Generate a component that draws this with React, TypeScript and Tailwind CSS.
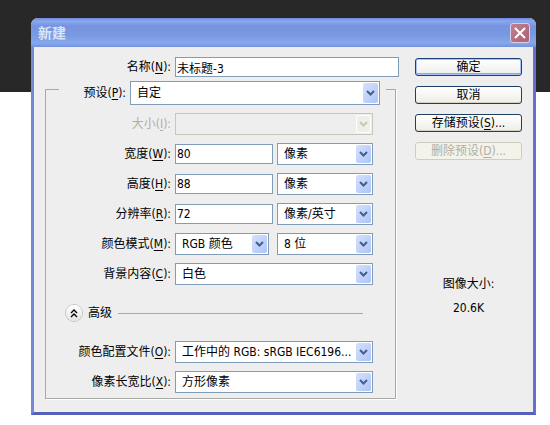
import type { ReactNode } from 'react';

function Hotkey({ children }: { children: ReactNode }) {
  return <span className="underline underline-offset-2">{children}</span>;
}

function Label({ id, text, hotkey, disabled = false, width = 'w-[125px]' }: { id: string; text: string; hotkey: string; disabled?: boolean; width?: string }) {
  return (
    <label htmlFor={id} className={`${width} shrink-0 whitespace-nowrap text-right ${disabled ? 'text-[#b0aea4]' : ''}`}>
      {text}(<Hotkey>{hotkey}</Hotkey>):
    </label>
  );
}

function Select({ id, value, width = 'flex-1', height = 'h-[22px]', label, disabled = false }: { id: string; value: string; width?: string; height?: string; label?: string; disabled?: boolean }) {
  return (
    <div className={`relative min-w-0 ${width}`}>
      <select
        id={id}
        aria-label={label}
        disabled={disabled}
        className={`block w-full appearance-none border pl-1.5 pr-4 outline-none ${height} ${
          disabled ? 'border-[#c9c7ba] bg-[#eeeeee] opacity-100' : 'border-[#7f9db9] bg-white'
        }`}
      >
        <option>{value}</option>
      </select>
      <span
        className={`pointer-events-none absolute inset-y-0.5 right-0.5 flex w-[15px] items-center justify-center rounded-xs ${
          disabled ? 'border border-white bg-[#efeee8] text-[#c9c7ba]' : 'bg-linear-to-br from-[#d5e0fd] to-[#afc5f6] text-[#44608c]'
        }`}
      >
        <svg width="9" height="6" viewBox="0 0 9 6" className="shrink-0" fill="none" stroke="currentColor" strokeWidth="2">
          <path d="M1 1l3.5 3.5L8 1" />
        </svg>
      </span>
    </div>
  );
}

function TextInput({ id, value, width }: { id: string; value: string; width: string }) {
  return <input id={id} defaultValue={value} className={`h-5 min-w-0 border border-[#7f9db9] bg-white px-px outline-none ${width}`} />;
}

function Row({ children }: { children: ReactNode }) {
  return <div className="flex h-[22px] items-center gap-1">{children}</div>;
}

function Button({ children, primary = false, disabled = false }: { children: ReactNode; primary?: boolean; disabled?: boolean }) {
  const look = disabled
    ? 'border-[#cfcdbf] bg-[#f4f3ea] text-[#b0aea4]'
    : primary
      ? 'border-[#1d3f77] bg-linear-to-b from-white to-[#eeeeec] shadow-[inset_0_0_0_1px_#a9c4f2,inset_0_-2px_0_#86a7e8]'
      : 'border-[#1d3f63] bg-linear-to-b from-white to-[#eeede6] shadow-[inset_0_-1px_0_#d6d0c5]';
  return (
    <button type="button" disabled={disabled} className={`flex h-[18px] w-full items-center justify-center rounded-[3px] border whitespace-nowrap ${look}`}>
      <span>{children}</span>
    </button>
  );
}

export default function App() {
  return (
    <div className="min-h-screen bg-[linear-gradient(#282828_92px,#ffffff_92px)] pt-[18px] pr-3.5 pb-2 pl-[31px] font-['DejaVu_Sans_Condensed','Noto_Sans_CJK_SC',sans-serif] text-[12px] leading-4 text-black">
      <main className="overflow-hidden rounded-t-[7px] bg-[#eeeeee]">
        <header className="flex h-[29px] items-center justify-between bg-[linear-gradient(#6f87dc,#8aa9f0_3px,#7793df_8px,#7a9ae2_18px,#86a8ee_25px,#7690dc)] pr-1.5 pl-[7px]">
          <h1 className="text-[14px] font-bold text-[#d8e4f8]">新建</h1>
          <button type="button" aria-label="关闭" className="flex size-5 items-center justify-center rounded-[3px] border border-[#dccfe4] bg-linear-to-br from-[#c08090] to-[#ac6274] text-white">
            <svg width="12" height="12" viewBox="0 0 12 12" stroke="currentColor" strokeWidth="2">
              <path d="M1 1l10 10M11 1L1 11" />
            </svg>
          </button>
        </header>

        <form className="flex gap-4 border-x-3 border-b-3 border-l-[#7189d8] border-r-[#6471d2] border-b-[#5661bd] px-[11px] pt-2.5 pb-[13px]">
          <div className="min-w-0 flex-1">
            <div className="flex items-center gap-1">
              <Label id="name" text="名称" hotkey="N" width="w-[126px]" />
              <TextInput id="name" value="未标题-3" width="flex-1" />
            </div>

            <fieldset className="mt-1 mr-[3px] border border-[#a9a9a5] pb-[5px] shadow-[1px_1px_0_#ffffff]">
              {/* the select is taller than the legend so the frame line sits near its top */}
              <legend className="ml-[13px] h-4 w-[calc(100%-22px)]">
                <div className="flex h-6 items-center gap-1 bg-[#eeeeee] pr-1.5">
                  <Label id="preset" text="预设" hotkey="P" width="w-[67px]" />
                  <Select id="preset" value="自定" height="h-6" />
                </div>
              </legend>

              <div className="flex flex-col gap-2 pt-4 pr-[22px]">
                <Row>
                  <Label id="size" text="大小" hotkey="I" disabled />
                  <Select id="size" value="" disabled />
                </Row>
                <Row>
                  <Label id="width" text="宽度" hotkey="W" />
                  <TextInput id="width" value="80" width="w-[98px]" />
                  <Select id="width-unit" label="宽度单位" value="像素" />
                </Row>
                <Row>
                  <Label id="height" text="高度" hotkey="H" />
                  <TextInput id="height" value="88" width="w-[98px]" />
                  <Select id="height-unit" label="高度单位" value="像素" />
                </Row>
                <Row>
                  <Label id="resolution" text="分辨率" hotkey="R" />
                  <TextInput id="resolution" value="72" width="w-[98px]" />
                  <Select id="resolution-unit" label="分辨率单位" value="像素/英寸" />
                </Row>
                <Row>
                  <Label id="mode" text="颜色模式" hotkey="M" />
                  <div className="flex flex-1 gap-2">
                    <Select id="mode" value="RGB 颜色" width="w-[94px]" />
                    <Select id="depth" label="位深度" value="8 位" />
                  </div>
                </Row>
                <Row>
                  <Label id="background" text="背景内容" hotkey="C" />
                  <Select id="background" value="白色" />
                </Row>

                <div className="my-3 ml-5 flex h-4 items-center gap-1.5 pr-2.5">
                  <button type="button" aria-label="高级" className="flex size-4 items-center justify-center rounded-full bg-linear-to-b from-white to-[#e4e4e4] shadow-[0_0_0_1px_#c4c4c4]">
                    <svg width="8" height="9" viewBox="0 0 8 9" fill="none" stroke="currentColor" strokeWidth="1.4">
                      <path d="M1 4l3-3 3 3M1 8l3-3 3 3" />
                    </svg>
                  </button>
                  <span>高级</span>
                  <span className="h-px flex-1 bg-[#a9a9a5]" />
                </div>

                <Row>
                  <Label id="profile" text="颜色配置文件" hotkey="O" />
                  <Select id="profile" value="工作中的 RGB: sRGB IEC6196..." />
                </Row>
                <Row>
                  <Label id="aspect" text="像素长宽比" hotkey="X" />
                  <Select id="aspect" value="方形像素" />
                </Row>
              </div>
            </fieldset>
          </div>

          <aside className="w-[107px] shrink-0 pt-px">
            <div className="flex flex-col gap-2.5">
              <Button primary>确定</Button>
              <Button>取消</Button>
              <Button>
                存储预设(<Hotkey>S</Hotkey>)...
              </Button>
              <Button disabled>
                删除预设(<Hotkey>D</Hotkey>)...
              </Button>
            </div>
            <div className="mt-28 text-center leading-6">
              <p>图像大小:</p>
              <p>20.6K</p>
            </div>
          </aside>
        </form>
      </main>
    </div>
  );
}
